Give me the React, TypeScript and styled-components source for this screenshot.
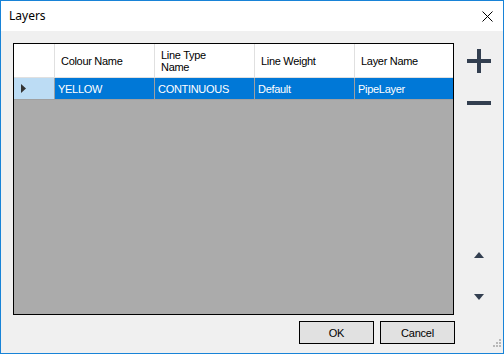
import React from 'react';
import styled, { createGlobalStyle } from 'styled-components';

const GlobalStyle = createGlobalStyle`
  html, body {
    margin: 0;
    padding: 0;
    background: #ffffff;
  }
`;

const Window = styled.div`
  width: 504px;
  height: 354px;
  box-sizing: border-box;
  border: 1px solid #1883d7;
  display: flex;
  flex-direction: column;
  background: #f0f0f0;
  font-family: 'Liberation Sans', Arial, sans-serif;
  overflow: hidden;
`;

const TitleBar = styled.div`
  height: 30px;
  flex: none;
  background: #ffffff;
  display: flex;
  align-items: center;
  justify-content: space-between;
  padding: 0 10px 0 8px;
`;

const Title = styled.span`
  font-family: 'Noto Sans', 'Open Sans', sans-serif;
  font-size: 12px;
  color: #000000;
  margin-top: -1px;
`;

const CloseButton = styled.div`
  width: 12px;
  height: 12px;
  display: flex;
  align-items: center;
  justify-content: center;
`;

const Client = styled.div`
  flex: 1;
  display: flex;
  padding: 12px 0 0 12px;
  position: relative;
`;

const LeftColumn = styled.div`
  display: flex;
  flex-direction: column;
  width: 442px;
`;

const GridBox = styled.div`
  width: 441px;
  height: 272px;
  box-sizing: border-box;
  border: 1px solid #000000;
  background: #ababab;
  display: flex;
  flex-direction: column;
`;

const Row = styled.div<{ $header?: boolean }>`
  display: grid;
  grid-template-columns: 41px 100px 100px 100px 98px;
  height: ${p => (p.$header ? '34px' : '22px')};
`;

const HeaderCell = styled.div`
  background: #ffffff;
  box-sizing: border-box;
  border-right: 1px solid #e0e0e0;
  border-bottom: 1px solid #e0e0e0;
  display: flex;
  align-items: center;
  padding-left: 6px;
  font-size: 11px;
  letter-spacing: -0.3px;
  line-height: 12px;
  color: #000000;
  white-space: pre-line;
  &:last-child {
    border-right: none;
  }
`;

const RowHeader = styled.div`
  background: #bcdcf4;
  box-sizing: border-box;
  border-right: 1px solid #a0a0a0;
  border-bottom: 1px solid #a0a0a0;
  display: flex;
  align-items: center;
  padding-left: 7px;
`;

const Cell = styled.div`
  background: #0078d7;
  color: #ffffff;
  box-sizing: border-box;
  border-right: 1px solid #a0a0a0;
  border-bottom: 1px solid #a0a0a0;
  display: flex;
  align-items: center;
  padding-left: 3px;
  font-size: 11px;
  letter-spacing: -0.3px;
  &:last-child {
    border-right: none;
  }
`;

const ButtonRow = styled.div`
  display: flex;
  justify-content: flex-end;
  gap: 6px;
  margin-top: 6px;
`;

const DialogButton = styled.button`
  width: 75px;
  height: 23px;
  box-sizing: border-box;
  border: 1px solid #000000;
  background: #e1e1e1;
  font-family: 'Liberation Sans', Arial, sans-serif;
  font-size: 11px;
  letter-spacing: -0.2px;
  color: #000000;
  padding: 0;
`;

const SideColumn = styled.div`
  width: 48px;
  display: flex;
  flex-direction: column;
  align-items: center;
  padding-top: 6px;
`;

const IconButton = styled.div<{ $mt: number }>`
  margin-top: ${p => p.$mt}px;
  display: flex;
`;

const Grip = styled.div`
  position: absolute;
  right: 2px;
  bottom: 2px;
`;

const dark = '#333f50';

const App: React.FC = () => {
  const headers = ['Colour Name', 'Line Type\nName', 'Line Weight', 'Layer Name'];
  const row = ['YELLOW', 'CONTINUOUS', 'Default', 'PipeLayer'];

  return (
    <>
      <GlobalStyle />
      <Window>
        <TitleBar>
          <Title>Layers</Title>
          <CloseButton>
            <svg width="11" height="11" viewBox="0 0 11 11">
              <path d="M0.5 0.5 L10.5 10.5 M10.5 0.5 L0.5 10.5" stroke="#000" strokeWidth="1" />
            </svg>
          </CloseButton>
        </TitleBar>
        <Client>
          <LeftColumn>
            <GridBox>
              <Row $header>
                <HeaderCell />
                {headers.map(h => (
                  <HeaderCell key={h}>{h}</HeaderCell>
                ))}
              </Row>
              <Row>
                <RowHeader>
                  <svg width="5" height="9" viewBox="0 0 5 9">
                    <path d="M0 0 L5 4.5 L0 9 Z" fill="#333" />
                  </svg>
                </RowHeader>
                {row.map(c => (
                  <Cell key={c}>{c}</Cell>
                ))}
              </Row>
            </GridBox>
            <ButtonRow>
              <DialogButton>OK</DialogButton>
              <DialogButton>Cancel</DialogButton>
            </ButtonRow>
          </LeftColumn>
          <SideColumn>
            <IconButton $mt={0}>
              <svg width="24" height="24" viewBox="0 0 24 24">
                <rect x="10" y="0" width="4" height="24" fill={dark} />
                <rect x="0" y="10" width="24" height="4" fill={dark} />
              </svg>
            </IconButton>
            <IconButton $mt={28}>
              <svg width="24" height="4" viewBox="0 0 24 4">
                <rect x="0" y="0" width="24" height="4" fill={dark} />
              </svg>
            </IconButton>
            <IconButton $mt={147}>
              <svg width="10" height="6" viewBox="0 0 10 6">
                <path d="M5 0 L10 6 L0 6 Z" fill={dark} />
              </svg>
            </IconButton>
            <IconButton $mt={36}>
              <svg width="10" height="6" viewBox="0 0 10 6">
                <path d="M0 0 L10 0 L5 6 Z" fill={dark} />
              </svg>
            </IconButton>
          </SideColumn>
          <Grip>
            <svg width="10" height="10" viewBox="0 0 10 10">
              {[
                [8, 0],
                [8, 3],
                [5, 3],
                [8, 6],
                [5, 6],
                [2, 6],
              ].map(([x, y]) => (
                <rect key={`${x}-${y}`} x={x} y={y + 2} width="2" height="2" fill="#b8b8b8" />
              ))}
            </svg>
          </Grip>
        </Client>
      </Window>
    </>
  );
};

export default App;
